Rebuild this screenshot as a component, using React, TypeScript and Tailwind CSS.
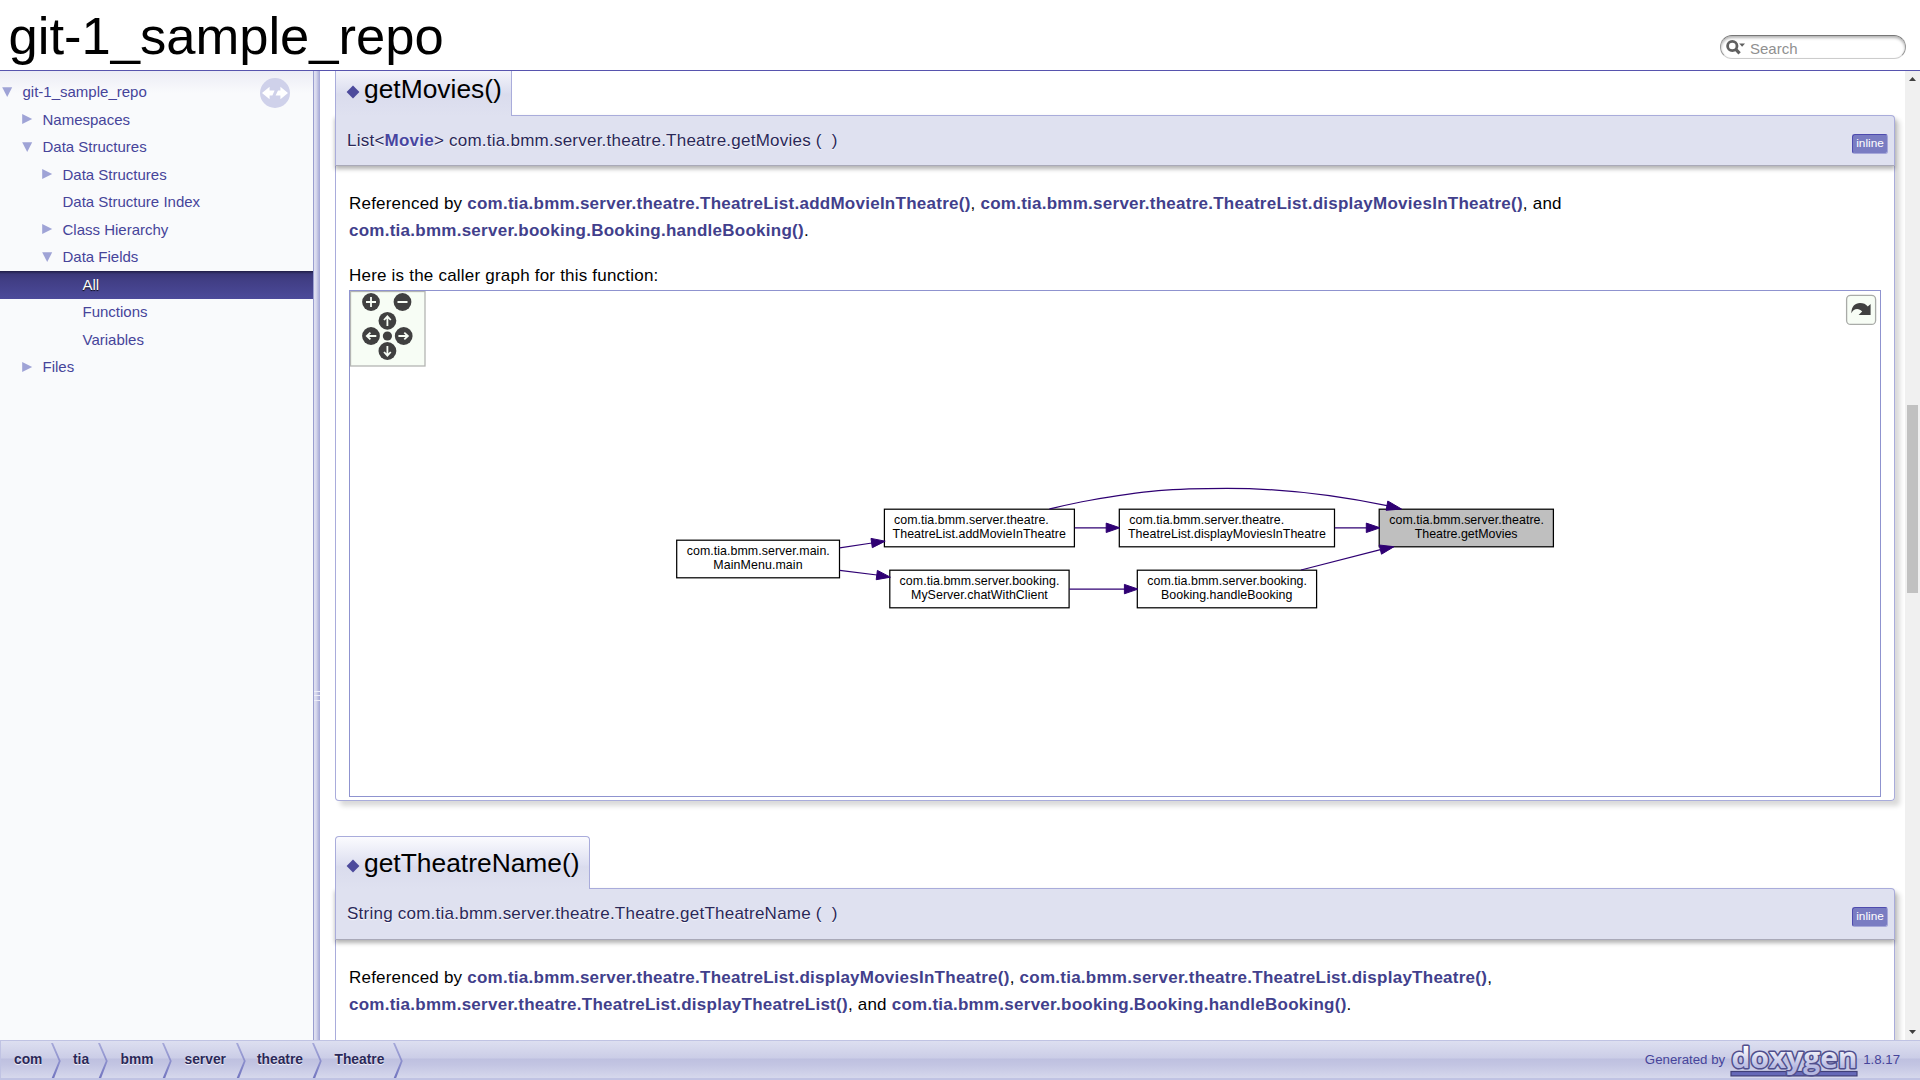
import React from 'react';

const SANS = "font-['Liberation_Sans',Arial,sans-serif]";

type TreeItem = { label: string; depth: number; arrow?: 'open' | 'closed'; selected?: boolean };

const TREE: TreeItem[] = [
  { label: 'git-1_sample_repo', depth: 0, arrow: 'open' },
  { label: 'Namespaces', depth: 1, arrow: 'closed' },
  { label: 'Data Structures', depth: 1, arrow: 'open' },
  { label: 'Data Structures', depth: 2, arrow: 'closed' },
  { label: 'Data Structure Index', depth: 2 },
  { label: 'Class Hierarchy', depth: 2, arrow: 'closed' },
  { label: 'Data Fields', depth: 2, arrow: 'open' },
  { label: 'All', depth: 3, selected: true },
  { label: 'Functions', depth: 3 },
  { label: 'Variables', depth: 3 },
  { label: 'Files', depth: 1, arrow: 'closed' },
];

const INDENT = ['pl-[2px]', 'pl-[22px]', 'pl-[42px]', 'pl-[62px]'];

function Arrow({ kind }: { kind?: 'open' | 'closed' }) {
  return (
    <svg width="20.5" height="12" viewBox="0 0 20.5 12" className="mb-px shrink-0">
      {kind === 'open' && <path d="M0.2 1.3H10.2L5.2 11Z" fill="#9fa3d6" />}
      {kind === 'closed' && <path d="M0.2 1L10.2 6L0.2 11Z" fill="#9fa3d6" />}
    </svg>
  );
}

function Sidebar() {
  return (
    <nav className="relative flex w-[313px] shrink-0 flex-col bg-[#f9fafc] bg-[linear-gradient(to_bottom,#ececf5_0,#f9fafc_22px)] pt-[7.5px] text-[15px] text-[#46449a]">
      {TREE.map((t, i) => (
        <div
          key={i}
          className={`flex h-[27.5px] items-center ${INDENT[t.depth]} ${
            t.selected
              ? 'bg-[linear-gradient(to_bottom,#1f1d45_0,#3a3778_3px,#403d83_8px,#4c4a9a_100%)] text-white [text-shadow:0_1px_1px_black]'
              : ''
          }`}
        >
          <Arrow kind={t.arrow} />
          <span className="relative top-[0.3px]">{t.label}</span>
        </div>
      ))}
      <svg width="30" height="30" viewBox="0 0 30 30" className="absolute left-[260px] top-[7px]">
        <circle cx="15" cy="15" r="15" fill="#cfd1ea" />
        <path d="M2 15L9.6 8.8V12.4H14.6L12.4 17.6H9.6V21.2Z" fill="#fff" />
        <path d="M28 15L20.4 8.8V12.4H18L15.6 17.6H20.4V21.2Z" fill="#fff" />
      </svg>
    </nav>
  );
}

function Splitter() {
  return (
    <div className="flex w-[7px] shrink-0 flex-col justify-center border-l border-[#9a9ed0] bg-[linear-gradient(to_right,#dfe0f0_0,#d9daee_2px,#bcbee0_4px,#a3a6d6_6px)]">
      <div className="relative top-[140px] flex h-[10px] flex-col justify-between">
        <i className="h-px bg-[#eeeef8]" />
        <i className="h-px bg-[#eeeef8]" />
        <i className="h-px bg-[#eeeef8]" />
      </div>
    </div>
  );
}

function Link({ children }: { children: React.ReactNode }) {
  return <a className="font-bold tracking-[0.257px] text-[#423f8c]">{children}</a>;
}

function Member({
  title,
  tab,
  bar,
  proto,
  children,
}: {
  title: string;
  tab: string;
  bar: string;
  proto: React.ReactNode;
  children: React.ReactNode;
}) {
  return (
    <section className="flex w-[1560px] flex-col">
      <h2
        className={`relative z-10 -mb-px flex h-[53px] items-center rounded-t-[4px] border border-b-0 border-[#a9acdb] bg-[linear-gradient(to_bottom,#fbfbfe_0,#dddff0_28px,#dadced_30px,#dfe1f0_100%)] pl-[10px] text-[26.4px] ${tab}`}
      >
        <svg width="14" height="14" viewBox="0 0 14 14" className="relative top-[1.5px] mr-[4px]">
          <path d="M7 0.5L13.4 7L7 13.5L0.6 7Z" fill="#4c4a9c" />
        </svg>
        <span>{title}</span>
      </h2>
      <div className="flex flex-col rounded-b-[4px] rounded-tr-[4px] shadow-[5px_5px_5px_rgba(0,0,0,0.15)]">
        <div
          className={`relative flex items-center justify-between rounded-tr-[4px] border border-[#a9acdb] border-b-[#a9a9b8] bg-[#dfe1f0] pl-[11px] pr-[6px] text-[17px] text-[#2a2858] shadow-[0_3px_4px_rgba(0,0,0,0.3)] [text-shadow:0_1px_1px_rgba(255,255,255,0.9)] ${bar}`}
        >
          <span className="whitespace-pre tracking-[0.236px]">{proto}</span>
          <span className="relative top-[3px] flex h-[20px] w-[36px] items-center justify-center rounded-[3px] border border-[#a5a7d9] border-l-[#4e4bae] border-t-[#4e4bae] bg-[#797cc2] pt-px text-[11.8px] text-white [text-shadow:none]">
            inline
          </span>
        </div>
        <div className="rounded-b-[4px] border border-t-0 border-[#a9acdb] bg-white px-[13px]">{children}</div>
      </div>
    </section>
  );
}

type GraphNode = { x: number; y: number; w: number; a: [string, number, number]; b: [string, number, number]; root?: boolean };

const NODES: GraphNode[] = [
  { x: 676.7, y: 540.2, w: 162.8, a: ['com.tia.bmm.server.main.', 686.7, 143.3], b: ['MainMenu.main', 713.3, 89.5] },
  { x: 884.4, y: 509.2, w: 190, a: ['com.tia.bmm.server.theatre.', 894, 155], b: ['TheatreList.addMovieInTheatre', 892.6, 173.5] },
  { x: 889.8, y: 570.2, w: 179.3, a: ['com.tia.bmm.server.booking.', 899.6, 160], b: ['MyServer.chatWithClient', 911, 137] },
  { x: 1119.3, y: 509.2, w: 215.2, a: ['com.tia.bmm.server.theatre.', 1129.3, 155], b: ['TheatreList.displayMoviesInTheatre', 1128, 198] },
  { x: 1137.3, y: 570.2, w: 179.3, a: ['com.tia.bmm.server.booking.', 1147.2, 160], b: ['Booking.handleBooking', 1160.9, 131.6] },
  { x: 1379.2, y: 509.2, w: 174.2, a: ['com.tia.bmm.server.theatre.', 1389.2, 155], b: ['Theatre.getMovies', 1414.7, 103], root: true },
];

const EDGES = [
  'M839.7 547.8L872 543',
  'M839.7 570.3L877 575',
  'M1074.7 527.8H1107',
  'M1334.7 527.8H1367',
  'M1069.3 589.1H1125',
  'M1301 570L1380.5 549.6',
  'M1049.3 509C1062 506 1075 502.8 1089 500.5C1145 490.5 1172 488.3 1227 488.3C1281 488.3 1340 496 1387 505.6',
];

const HEADS = [
  '871,538.4 872.3,547.7 885.2,541.2',
  '877.4,570.4 876.2,579.7 890.4,577.2',
  '1106.2,523.1 1106.2,532.5 1119.8,527.8',
  '1366.3,523.1 1366.3,532.5 1380,527.8',
  '1124.4,584.4 1124.4,593.8 1138,589.1',
  '1379.2,545 1381.5,554.2 1394,546.7',
  '1387.8,501 1386.1,510.3 1401.5,509',
];

function CallerGraph() {
  return (
    <div className="relative h-[507px] w-[1532px] border border-[#8f93cf] bg-white">
      <svg width="1530" height="505" viewBox="350 291 1530 505" className="block">
        {NODES.map((n, i) => (
          <g key={i}>
            <rect x={n.x} y={n.y} width={n.w} height="37.6" fill={n.root ? '#bfbfbf' : '#fff'} stroke="#000" strokeWidth="1.24" />
            <g fontFamily="Liberation Sans, Arial, sans-serif" fontSize="12.4" fill="#000">
              <text x={n.a[1]} y={n.y + 14.9} textLength={n.a[2]}>{n.a[0]}</text>
              <text x={n.b[1]} y={n.y + 28.9} textLength={n.b[2]}>{n.b[0]}</text>
            </g>
          </g>
        ))}
        {EDGES.map((d) => (
          <path key={d} d={d} fill="none" stroke="#2f0073" strokeWidth="1.24" />
        ))}
        {HEADS.map((p) => (
          <polygon key={p} points={p} fill="#2f0073" stroke="#2f0073" strokeWidth="1" />
        ))}
        <rect x="350.5" y="291.5" width="74.5" height="74.5" fill="#f7fdf5" stroke="#b4b6b3" strokeWidth="1.3" />
        <g fill="#404040">
          <circle cx="371" cy="302" r="8.9" />
          <circle cx="402.5" cy="302" r="8.9" />
          <circle cx="387.4" cy="320.8" r="8.9" />
          <circle cx="371" cy="336" r="8.9" />
          <circle cx="403.7" cy="336" r="8.9" />
          <circle cx="387.4" cy="351" r="8.9" />
          <circle cx="387.4" cy="336" r="4.6" />
        </g>
        <g stroke="#f7fdf5" strokeWidth="1.8" fill="none">
          <path d="M366 302H376M371 297V307M397.5 302H407.5" />
          <path d="M387.4 326V317M384 320L387.4 316.4L390.8 320" />
          <path d="M387.4 346V355M384 352L387.4 355.6L390.8 352" />
          <path d="M376.3 336H367M370.4 332.6L366.8 336L370.4 339.4" />
          <path d="M398.4 336H407.7M404.3 332.6L407.9 336L404.3 339.4" />
        </g>
        <rect x="1846.6" y="295.4" width="29" height="29" rx="4" fill="#f7fdf5" stroke="#a9aba8" strokeWidth="1.3" />
        <path d="M1851.3 313.3C1851.5 306.5 1855 303 1860 303C1863.5 303 1865.8 304.2 1867.8 306.4L1870.6 304V315H1858.6L1862.2 311.6C1859 307.6 1853.5 308.2 1851.3 313.3Z" fill="#404040" />
      </svg>
    </div>
  );
}

function Content() {
  return (
    <main className="relative min-w-0 flex-1 overflow-hidden bg-white">
      <div className="-mt-[8px] flex flex-col gap-[35px] pl-[15px]">
        <Member
          title="getMovies()"
          tab="w-[177px]"
          bar="h-[51px]"
          proto={
            <>
              List&lt;<b className="text-[#4745a0]">Movie</b>&gt; com.tia.bmm.server.theatre.Theatre.getMovies (&nbsp; )
            </>
          }
        >
          <div className="h-[634px] pt-[24px] text-[17px] leading-[27px] tracking-[0.21px]">
            <p>
              Referenced by <Link>com.tia.bmm.server.theatre.TheatreList.addMovieInTheatre()</Link>,{' '}
              <Link>com.tia.bmm.server.theatre.TheatreList.displayMoviesInTheatre()</Link>, and{' '}
              <Link>com.tia.bmm.server.booking.Booking.handleBooking()</Link>.
            </p>
            <p className="mt-[18px] h-[28px]">Here is the caller graph for this function:</p>
            <CallerGraph />
          </div>
        </Member>
        <Member
          title="getTheatreName()"
          tab="w-[255px] pt-[2px]"
          bar="h-[52px] pb-px"
          proto={<>String com.tia.bmm.server.theatre.Theatre.getTheatreName (&nbsp; )</>}
        >
          <div className="h-[300px] pt-[24px] text-[17px] leading-[27px] tracking-[0.21px]">
            <p>
              Referenced by <Link>com.tia.bmm.server.theatre.TheatreList.displayMoviesInTheatre()</Link>,{' '}
              <Link>com.tia.bmm.server.theatre.TheatreList.displayTheatre()</Link>,{' '}
              <Link>com.tia.bmm.server.theatre.TheatreList.displayTheatreList()</Link>, and{' '}
              <Link>com.tia.bmm.server.booking.Booking.handleBooking()</Link>.
            </p>
          </div>
        </Member>
      </div>
    </main>
  );
}

function Scrollbar() {
  return (
    <div className="flex w-[15px] shrink-0 flex-col items-center bg-[#f0f0f0]">
      <svg width="15" height="15" viewBox="0 0 15 15">
        <path d="M4 10H11L7.5 6Z" fill="#404040" />
      </svg>
      <div className="mt-[319px] h-[188px] w-[11px] bg-[#c1c1c1]" />
      <svg width="15" height="15" viewBox="0 0 15 15" className="mt-auto">
        <path d="M4 5H11L7.5 9Z" fill="#404040" />
      </svg>
    </div>
  );
}

const CRUMBS = [
  { label: 'com', cls: 'w-[59px] pl-[13px]' },
  { label: 'tia', cls: 'w-[47px] pl-[13px]' },
  { label: 'bmm', cls: 'w-[64px] pl-[13.5px]' },
  { label: 'server', cls: 'w-[74px] pl-[13.5px]' },
  { label: 'theatre', cls: 'w-[76px] pl-[12px]' },
  { label: 'Theatre', cls: 'w-[81px] pl-[13.5px]' },
];

function Footer() {
  return (
    <footer className="flex h-[40px] items-center border-b-2 border-l border-t border-[#c0c3e3] bg-[linear-gradient(to_bottom,#dddff0_0,#cbcde7_17px,#bec0e0_18px,#c3c5e3_24px,#d6d8ec_100%)]">
      <ul className="flex h-full flex-1">
        {CRUMBS.map((c) => (
          <li key={c.label} className={`flex h-full items-center text-[13.8px] font-bold text-[#2a2858] [text-shadow:0_1px_1px_rgba(255,255,255,0.9)] ${c.cls}`}>
            <span className="pt-[2px]">{c.label}</span>
            <svg width="10" height="37" viewBox="0 0 10 37" className="-mr-px ml-auto shrink-0">
              <defs>
                <linearGradient id="sep" x1="0" y1="0" x2="0" y2="1">
                  <stop offset="0" stopColor="#a6a9d9" />
                  <stop offset="1" stopColor="#7376c0" />
                </linearGradient>
              </defs>
              <path d="M0 2H2L9.7 20L3 37.5H0.5L7.8 20Z" fill="url(#sep)" />
            </svg>
          </li>
        ))}
      </ul>
      <div className="flex items-center pr-[20px] text-[13.25px] text-[#46449a]">
        <span>Generated by</span>
        <svg width="130" height="37" viewBox="0 0 130 37" className="ml-[4px] mr-[4px] shrink-0 overflow-visible">
          <defs>
            <linearGradient id="logo" x1="0" y1="0" x2="0" y2="1">
              <stop offset="0.25" stopColor="#ffffff" />
              <stop offset="0.8" stopColor="#b4b7e0" />
            </linearGradient>
          </defs>
          <rect x="2" y="30.5" width="126" height="4.4" fill="#6669b8" stroke="#403f78" strokeWidth="1.2" />
          <text
            x="2.5"
            y="26.8"
            textLength="126"
            lengthAdjust="spacingAndGlyphs"
            fontFamily="Open Sans, Noto Sans, sans-serif"
            fontWeight="700"
            fontSize="29"
            fill="url(#logo)"
            stroke="#504f8c"
            strokeWidth="3"
            paintOrder="stroke"
            strokeLinejoin="round"
          >
            doxygen
          </text>
        </svg>
        <span>1.8.17</span>
      </div>
    </footer>
  );
}

export default function App() {
  return (
    <div className={`flex h-[1080px] w-[1920px] flex-col overflow-hidden bg-white text-black ${SANS}`}>
      <header className="flex h-[71px] shrink-0 items-start justify-between border-b border-[#5754ae] pl-[8.5px] pr-[14px]">
        <h1 className="pt-[5px] text-[52.55px] leading-[61px]">git-1_sample_repo</h1>
        <div className="mt-[35px] flex h-[24px] w-[186px] items-center rounded-full border border-t-[#777] border-x-[#999] border-b-[#ccc] bg-white pl-[5px] shadow-[inset_0_2px_3px_rgba(0,0,0,0.3)]">
          <svg width="20" height="16" viewBox="0 0 20 16">
            <circle cx="6.3" cy="7" r="4.7" fill="none" stroke="#606060" strokeWidth="2.8" />
            <path d="M9.6 10.2L13.6 14.4" stroke="#606060" strokeWidth="3.2" />
            <path d="M13.2 4.6H19L16.1 7.8Z" fill="#606060" />
          </svg>
          <span className="relative top-[2px] ml-[4px] text-[15px] text-[#909090]">Search</span>
        </div>
      </header>
      <div className="flex h-[969px] shrink-0">
        <Sidebar />
        <Splitter />
        <Content />
        <Scrollbar />
      </div>
      <Footer />
    </div>
  );
}
